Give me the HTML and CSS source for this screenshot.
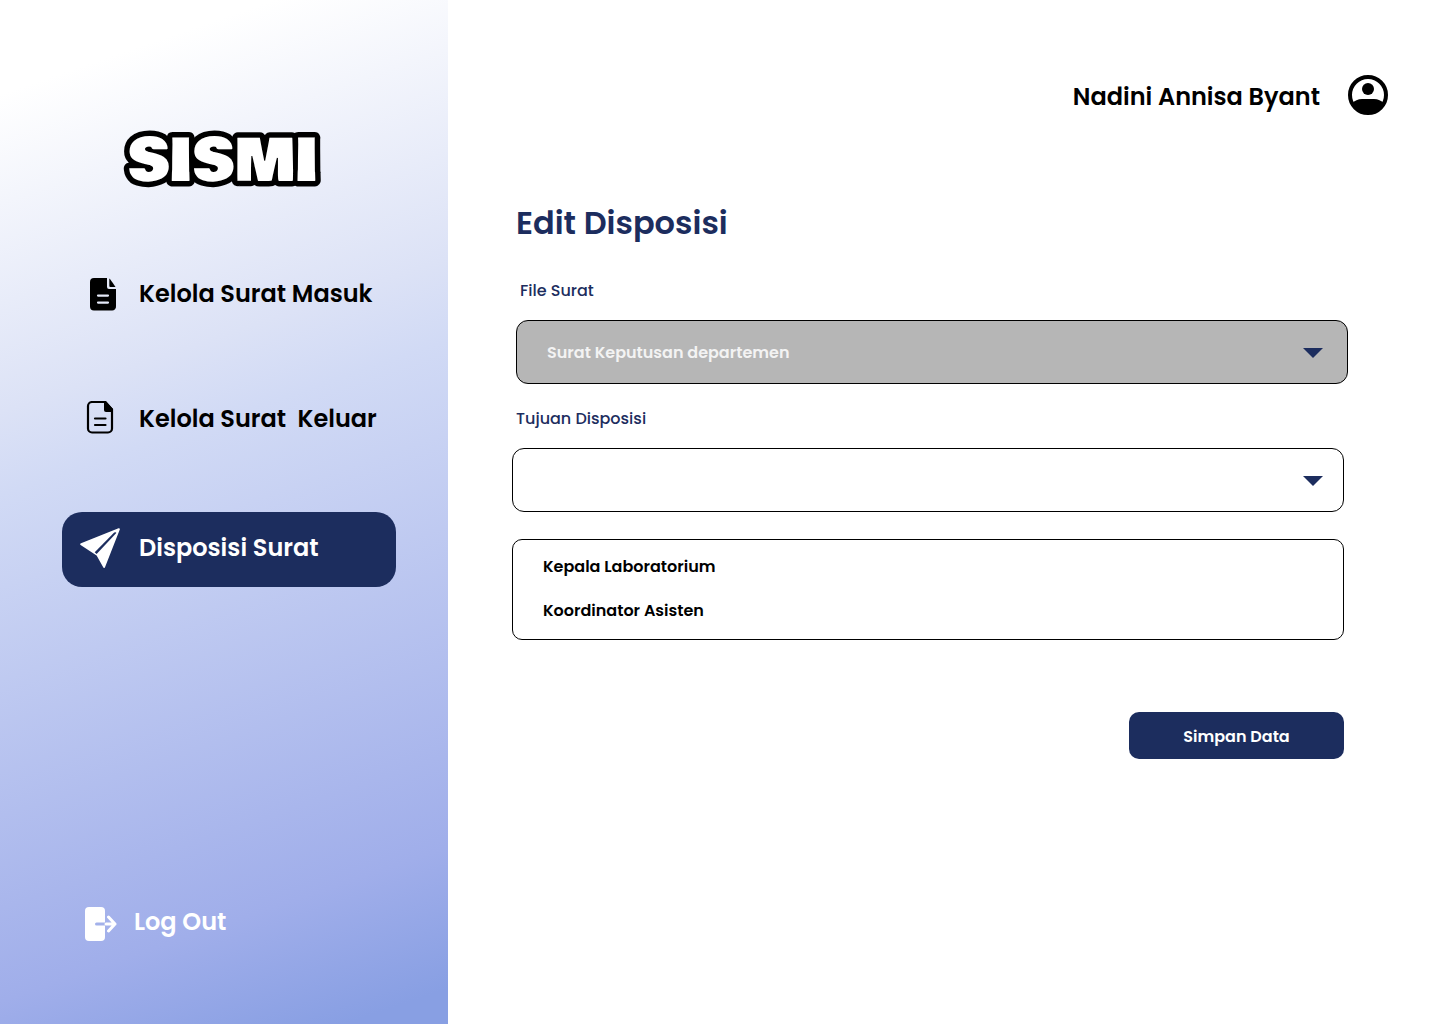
FILE: index.html
```html
<!DOCTYPE html>
<html lang="id">
<head>
  <meta charset="utf-8">
  <meta name="viewport" content="width=device-width, initial-scale=1">
  <title>Edit Disposisi</title>
  <link rel="stylesheet" href="styles.css">
</head>
<body>
  <div class="app">
    <aside class="sidebar">
      <svg class="logo" viewBox="0 0 200 64" role="img" aria-label="SISMI">
        <text class="logo-text" x="100" y="54" text-anchor="middle">SISMI</text>
      </svg>

      <nav class="nav">
        <a class="nav-item" href="#masuk">
          <svg class="icon" viewBox="0 0 40 40" aria-hidden="true">
            <path fill="currentColor" fill-rule="evenodd" d="M14 4h13v9a2 2 0 0 0 2 2h7v17a4 4 0 0 1-4 4.500H14a4 4 0 0 1-4-4V8a4 4 0 0 1 4-4zM18 20.500a1 1 0 0 0 0 2.200h10a1 1 0 0 0 0-2.200zM18 27.500a1 1 0 0 0 0 2.200h10a1 1 0 0 0 0-2.200z"/>
            <path fill="currentColor" d="M29.300 4.500Q30 4.500 35.500 13H30.300a1 1 0 0 1-1-1z"/>
          </svg>
          <span>Kelola Surat Masuk</span>
        </a>
        <a class="nav-item" href="#keluar">
          <svg class="icon" viewBox="0 0 40 40" aria-hidden="true">
            <path fill="none" stroke="currentColor" stroke-width="2.200" d="M11 3h14l7 7.500V29.500a4 4 0 0 1-4 4H12a4 4 0 0 1-4-4V7a4 4 0 0 1 4-4"/>
            <path fill="currentColor" d="M24 2h2l7 8v3h-7a2 2 0 0 1-2-2z"/>
            <path fill="none" stroke="currentColor" stroke-width="2.200" stroke-linecap="round" d="M15 19.500h10.500M15 26h10.500"/>
          </svg>
          <span>Kelola Surat  Keluar</span>
        </a>
        <a class="nav-item nav-item-active" href="#disposisi" aria-current="page">
          <svg class="icon" viewBox="0 0 40 40" aria-hidden="true">
            <path fill="currentColor" d="M38.500 0.200Q40.200 0 39.800 1.600L25 39.300Q24.200 40.800 23.200 39.300L16.600 27.500 0.600 17Q-0.600 15.800 1 15.200z"/>
            <path fill="#1c2d5e" d="M14.700 24.200 34.200 4.600Q36.200 3.600 36.300 5L16.600 26z"/>
          </svg>
          <span>Disposisi Surat</span>
        </a>
      </nav>

      <a class="logout" href="#logout">
        <svg class="logout-icon" viewBox="0 0 32 34" aria-hidden="true">
          <rect width="20" height="34" rx="4" fill="currentColor"/>
          <path class="logout-slot" d="M11.500 17H20"/>
          <path fill="none" stroke="currentColor" stroke-width="3" stroke-linecap="round" stroke-linejoin="round" d="M21 17h9M23.500 10l6.500 7-6.500 7"/>
        </svg>
        <span class="logout-text">Log Out</span>
      </a>
    </aside>

    <main class="main">
      <header class="topbar">
        <span class="user-name">Nadini Annisa Byant</span>
        <svg class="avatar" viewBox="0 0 40 40" role="img" aria-label="Profil">
          <circle cx="20" cy="20" r="18" fill="none" stroke="currentColor" stroke-width="4"/>
          <circle cx="20" cy="14" r="6" fill="currentColor"/>
          <path fill="currentColor" d="M4 28.500Q8 24 14 24h12q6 0 10 4.500A18 18 0 0 1 4 28.500z"/>
        </svg>
      </header>

      <form class="form">
        <h1 class="title">Edit Disposisi</h1>

        <div class="field field-locked">
          <label class="label" for="file">File Surat</label>
          <div class="select-wrap">
            <select class="select" id="file" disabled>
              <option>Surat Keputusan departemen</option>
            </select>
            <svg class="caret" viewBox="0 0 20 10" aria-hidden="true"><path fill="currentColor" d="M0 0h20L10 10z"/></svg>
          </div>
        </div>

        <div class="field">
          <label class="label" for="tujuan">Tujuan Disposisi</label>
          <div class="select-wrap">
            <select class="select" id="tujuan">
              <option></option>
            </select>
            <svg class="caret" viewBox="0 0 20 10" aria-hidden="true"><path fill="currentColor" d="M0 0h20L10 10z"/></svg>
          </div>
        </div>

        <ul class="options" role="listbox" aria-label="Tujuan Disposisi">
          <li role="option">Kepala Laboratorium</li>
          <li role="option">Koordinator Asisten</li>
        </ul>

        <button class="submit" type="submit">Simpan Data</button>
      </form>
    </main>
  </div>
</body>
</html>
```
FILE: styles.css
```css
:root {
  --navy: #1c2d5e;
}

* {
  box-sizing: border-box;
}

body {
  margin: 0;
  background: #fff;
  color: #000;
  font-family: Poppins, Inter, "Liberation Sans", sans-serif;
  font-size: 16px;
  line-height: 24px;
}

.app {
  display: grid;
  grid-template-columns: 14fr 31fr;
  min-height: 100vh;
}

.sidebar {
  display: flex;
  flex-direction: column;
  padding: 126px 52px 80px 62px;
  background: linear-gradient(161deg, #fff 8%, #dce2f6 35%, #d1daf5 42%, #a0aeea 85%, #889fe3 97%);
}

.logo {
  width: 200px;
  height: 64px;
  margin-left: 61px;
  overflow: visible;
}

.logo-text {
  fill: #fff;
  stroke: #000;
  stroke-width: 11px;
  stroke-linejoin: round;
  paint-order: stroke;
  font-family: "Bowlby One", Inter, sans-serif;
  font-size: 57px;
}

.nav {
  display: flex;
  flex-direction: column;
  gap: 50px;
  margin-top: 66px;
}

.nav-item {
  display: flex;
  align-items: center;
  gap: 19px;
  height: 75px;
  padding-left: 18px;
  border-radius: 20px;
  color: #000;
  font-size: 24px;
  font-weight: 600;
  text-decoration: none;
  white-space: pre;
}

.nav-item-active {
  margin-top: 6px;
  padding-bottom: 3px;
  background: var(--navy);
  color: #fff;
}

.icon {
  flex: none;
  width: 40px;
  height: 40px;
}

.logout {
  display: flex;
  align-items: center;
  gap: 17px;
  height: 40px;
  margin-top: auto;
  padding-left: 23px;
  color: #fff;
  font-size: 24px;
  font-weight: 600;
  text-decoration: none;
}

.logout-icon {
  width: 32px;
  height: 34px;
}

.logout-text {
  padding-bottom: 4px;
}

.logout-slot {
  fill: none;
  stroke: #a3b1ea;
  stroke-width: 3;
  stroke-linecap: round;
}

.topbar {
  display: flex;
  align-items: center;
  justify-content: flex-end;
  gap: 28px;
  padding: 75px 52px 0 64px;
}

.user-name {
  padding-top: 4px;
  font-size: 24px;
  font-weight: 600;
}

.avatar {
  width: 40px;
  height: 40px;
}

.form {
  display: flex;
  flex-direction: column;
  padding: 84px 96px 64px 64px;
}

.title {
  margin: 0 0 32px;
  padding-left: 4px;
  color: var(--navy);
  font-size: 32px;
  font-weight: 600;
  line-height: 48px;
}

.field {
  display: flex;
  flex-direction: column;
  gap: 17px;
}

.field-locked {
  margin: 0 -4px 23px 4px;
}

.label {
  padding-left: 4px;
  color: var(--navy);
  font-weight: 500;
}

.select-wrap {
  position: relative;
}

.select {
  display: block;
  width: 100%;
  height: 64px;
  padding: 2px 60px 0 30px;
  border: 1px solid #000;
  border-radius: 12px;
  background: #fff;
  color: #000;
  font: inherit;
  font-weight: 600;
  appearance: none;
}

.select:disabled {
  background: #b6b6b6;
  color: #f3f3f3;
  opacity: 1;
}

.caret {
  position: absolute;
  top: 28px;
  right: 21px;
  width: 20px;
  height: 10px;
  color: var(--navy);
  pointer-events: none;
}

.field-locked .caret {
  right: 25px;
}

.options {
  display: flex;
  flex-direction: column;
  gap: 20px;
  margin: 27px 0 72px;
  padding: 15px 30px 16px;
  border: 1px solid #000;
  border-radius: 10px;
  font-weight: 600;
  list-style: none;
}

.submit {
  align-self: flex-end;
  min-width: 215px;
  padding: 13px 24px 10px;
  border: 0;
  border-radius: 10px;
  background: var(--navy);
  color: #fff;
  font: inherit;
  font-weight: 600;
}
```
